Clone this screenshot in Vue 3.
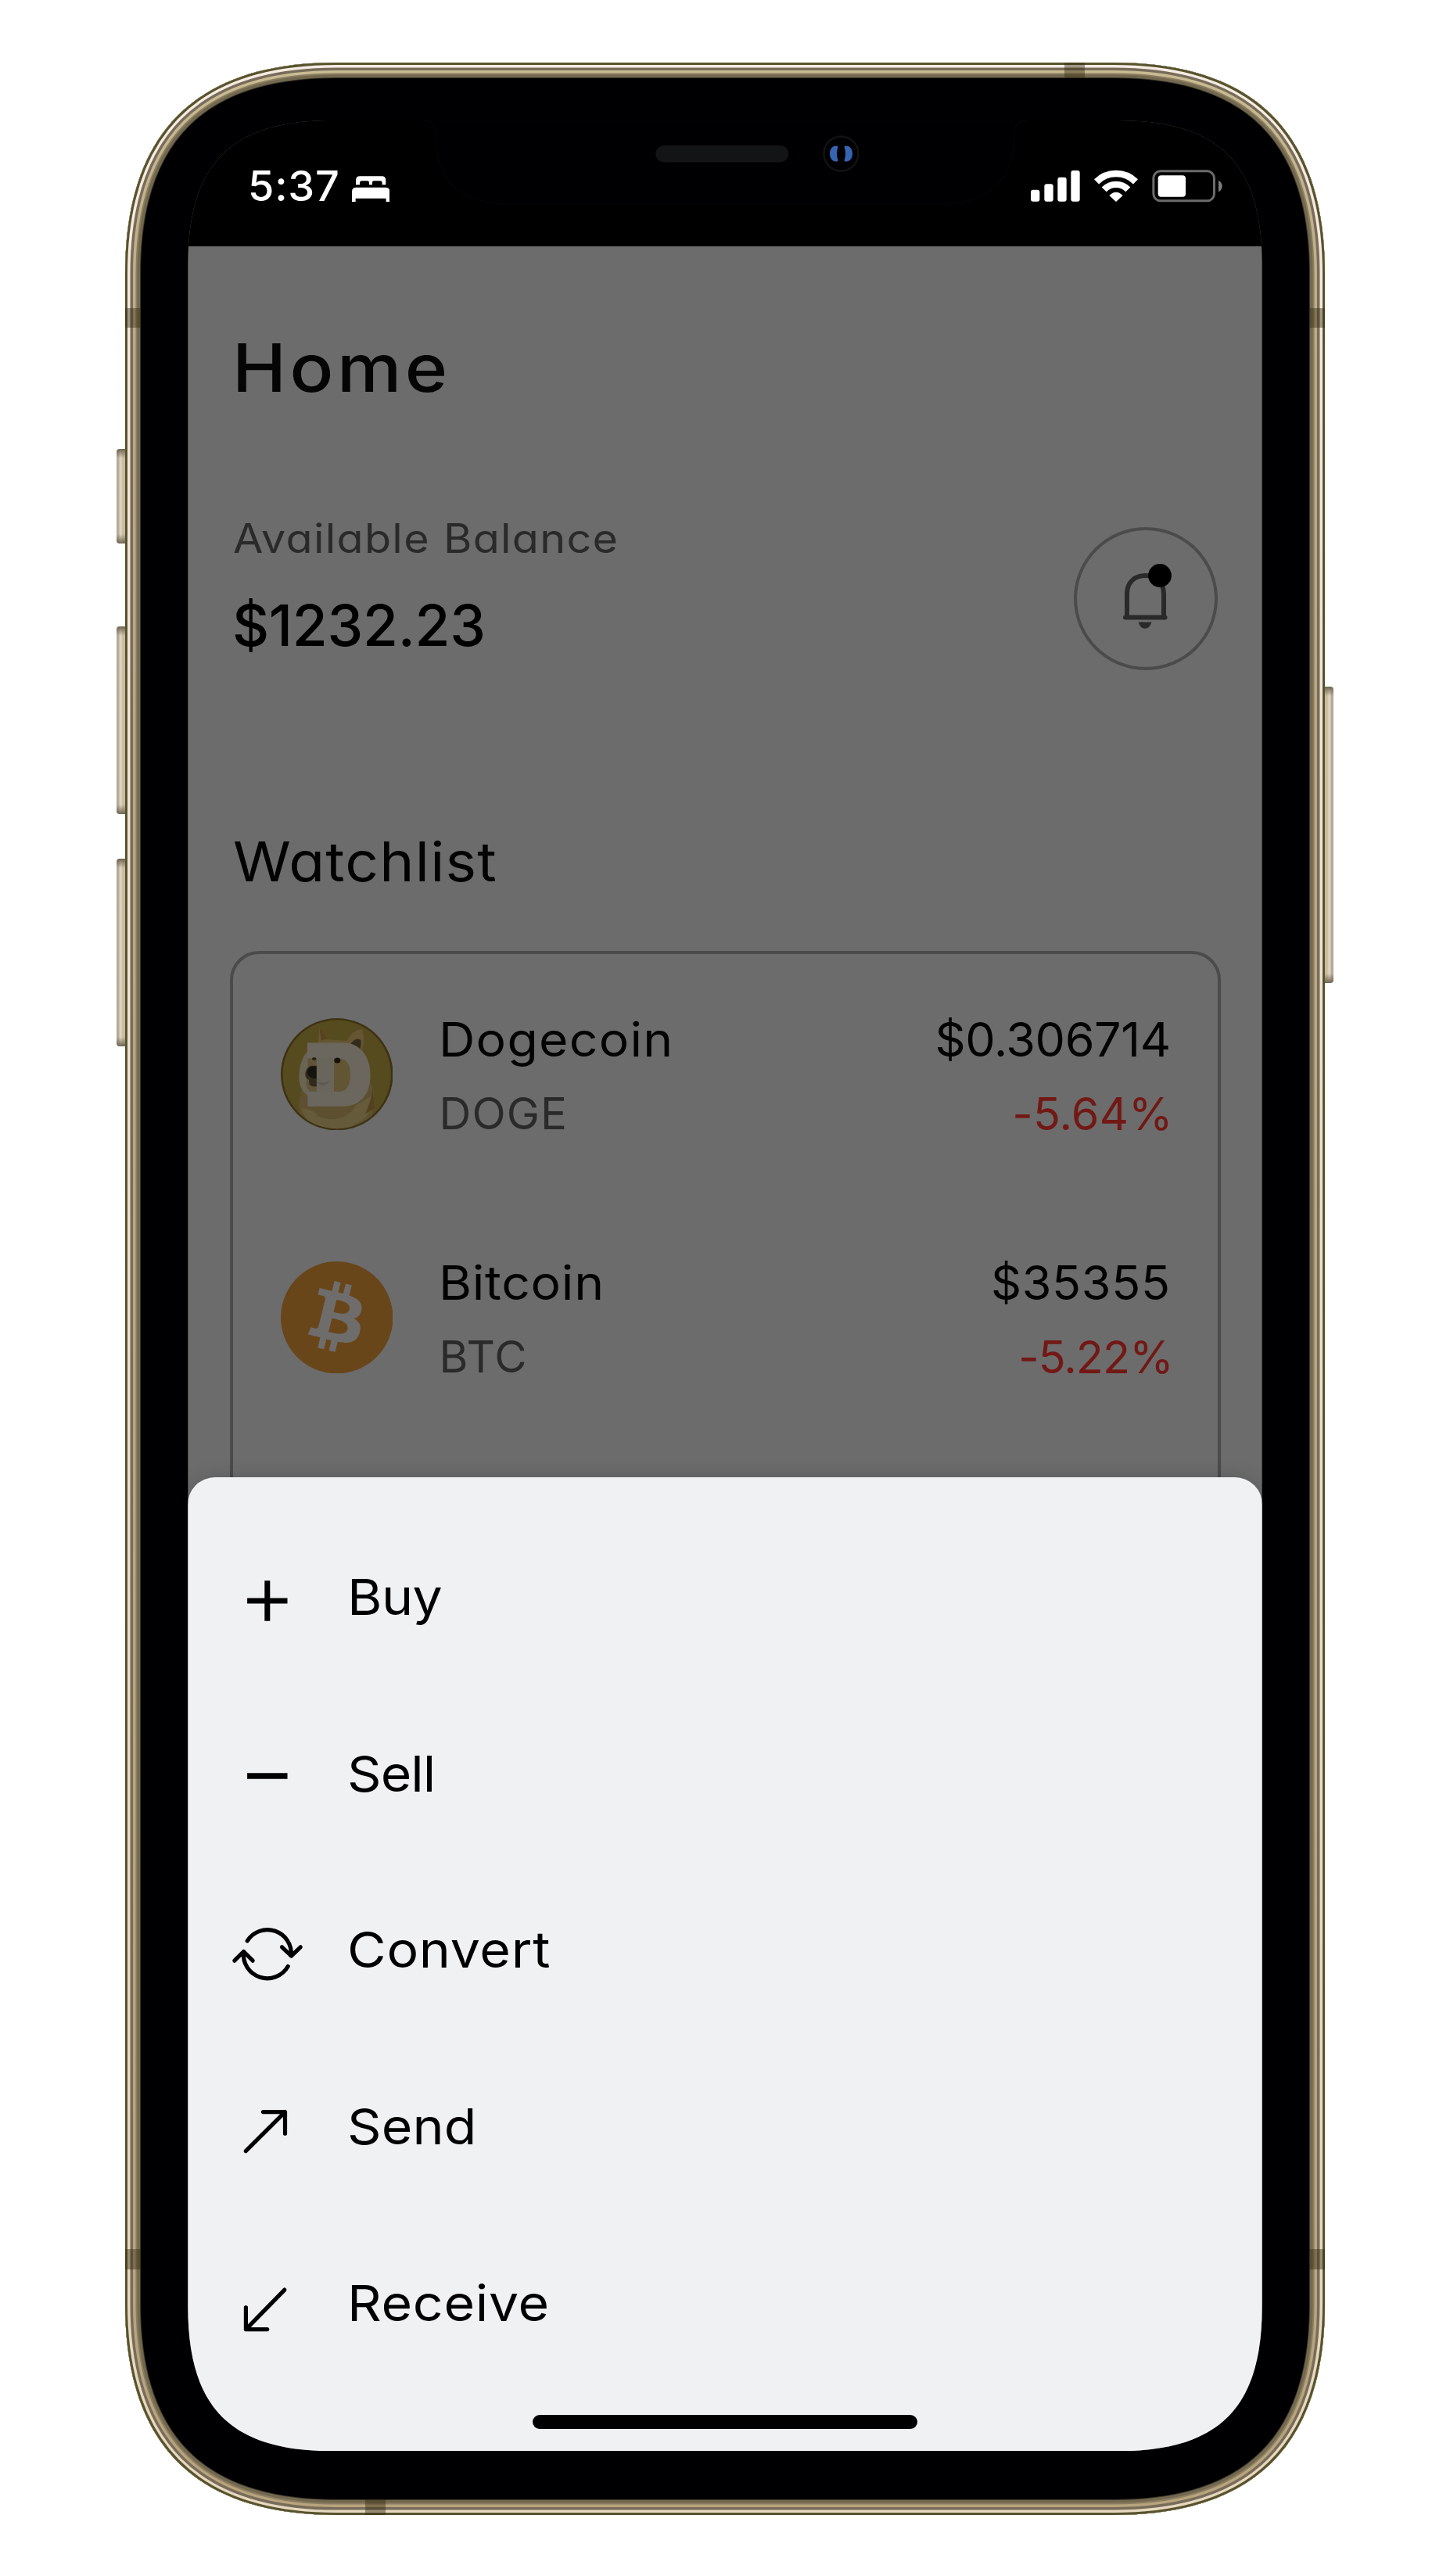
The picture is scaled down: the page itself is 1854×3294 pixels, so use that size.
<script setup>
// Rounded rectangle with continuous corners: `e` is where the curve starts, `c` its control distance.
function squircle(w, h, e, c) {
  return [
    `M0 ${e}C0 ${c} ${c} 0 ${e} 0`,
    `H${w - e}C${w - c} 0 ${w} ${c} ${w} ${e}`,
    `V${h - e}C${w} ${h - c} ${w - c} ${h} ${w - e} ${h}`,
    `H${e}C${c} ${h} 0 ${h - c} 0 ${h - e}Z`,
  ].join('')
}

const chassis = squircle(1534, 3136, 270, 90)

const coins = [
  { id: 'doge', name: 'Dogecoin', symbol: 'DOGE', price: '$0.306714', change: '-5.64%' },
  { id: 'btc', name: 'Bitcoin', symbol: 'BTC', price: '$35355', change: '-5.22%' },
]

const actions = [
  { id: 'buy', label: 'Buy', path: 'M22.1 53H73.5M47.8 27.3V78.7', width: 7, cap: 'butt' },
  { id: 'sell', label: 'Sell', path: 'M22.1 51H73.5', width: 7.5, cap: 'butt' },
  {
    id: 'convert',
    label: 'Convert',
    path: 'M22.2 36.8A30.5 30.5 0 0 1 78.3 56M66.5 44.8L78.5 56.2L90.2 44.8M17.5 50.7A30.5 30.5 0 0 0 74.2 69.5M5.8 62.2L17.5 50.5L29.2 62.2',
    width: 5.2,
    cap: 'round',
  },
  { id: 'send', label: 'Send', path: 'M20.2 79.6L70.5 29.6M42.5 29.6H70.5V57.2', width: 5.2, cap: 'round' },
  { id: 'receive', label: 'Receive', path: 'M69.8 31.1L20.4 81.6M20.4 53.7V81.6H47.7', width: 5.2, cap: 'round' },
]
</script>

<template>
  <div class="stage">
    <div class="phone">
      <i class="key mute"></i>
      <i class="key vol-up"></i>
      <i class="key vol-down"></i>
      <i class="key power"></i>

      <svg class="chassis" viewBox="0 0 1534 3136" fill="none">
        <defs>
          <clipPath id="body"><path :d="chassis" /></clipPath>
          <linearGradient id="tan" x1="0" y1="0" x2="0" y2="1">
            <stop offset="0" stop-color="#c9bc93" />
            <stop offset="0.12" stop-color="#bba984" />
            <stop offset="1" stop-color="#b7a47d" />
          </linearGradient>
          <linearGradient id="shine" x1="0" y1="0" x2="0" y2="1">
            <stop offset="0" stop-color="#f6ebe3" />
            <stop offset="1" stop-color="#e6d7bf" />
          </linearGradient>
        </defs>
        <g clip-path="url(#body)">
          <path :d="chassis" fill="#000003" stroke="#3d3829" stroke-width="40" />
          <path :d="chassis" stroke="#726850" stroke-width="38" />
          <path :d="chassis" stroke="#8a7d60" stroke-width="31" />
          <path :d="chassis" stroke="url(#tan)" stroke-width="27" />
          <path :d="chassis" stroke="#786c5a" stroke-width="20" />
          <path :d="chassis" stroke="url(#shine)" stroke-width="13" />
          <path :d="chassis" stroke="#57532d" stroke-width="6" />
          <g fill="#33290f" fill-opacity="0.43">
            <rect x="0" y="314" width="20" height="25" />
            <rect x="1514" y="314" width="20" height="25" />
            <rect x="0" y="2796" width="20" height="26" />
            <rect x="1514" y="2796" width="20" height="26" />
            <rect x="1201" y="0" width="26" height="20" />
            <rect x="307" y="3116" width="26" height="20" />
          </g>
        </g>
      </svg>

      <div class="screen">
        <header class="status">
          <svg class="notch" width="1373.4" height="161" viewBox="0 0 1373.4 161">
            <path d="M300 0Q316.7 0 316.7 17C316.7 70 340 107 415 107H958C1033 107 1056.7 70 1056.7 17Q1056.7 0 1073 0Z" fill="#000003" stroke="#07070d" stroke-width="1" />
            <rect x="598.3" y="32" width="170" height="21.5" rx="10.7" fill="#131415" />
            <circle cx="835.4" cy="42.5" r="22" fill="#000002" stroke="#121213" stroke-width="2.5" />
            <path d="M829 32.5C824 32.5 821 37 821 42.5S824 52.5 829 52.5Q831.5 53 831.5 51C829.5 46 829.5 39 831.5 34Q831.5 32 829 32.5Z" fill="#3565b0" />
            <path d="M842 32.5C847 32.5 850 37 850 42.5S847 52.5 842 52.5Q839.5 53 839.5 51C841.5 46 841.5 39 839.5 34Q839.5 32 842 32.5Z" fill="#3565b0" />
          </svg>
          <span class="time">5:37</span>
          <svg class="bed" width="48.3" height="33" viewBox="930 494 145 99" fill="#fff">
            <path d="M945 528V511Q945 495 961 495H1044Q1060 495 1060 511V528H1046V520Q1046 513 1039 513H1014Q1008 513 1008 519V528H996V519Q996 513 990 513H967Q960 513 960 520V528Z" />
            <path d="M930 593V554Q930 538 946 538H1059Q1075 538 1075 554V593H1061V580H944V593Z" />
          </svg>
          <svg class="signal" width="63" height="39.7" viewBox="233 474 189 119" fill="#fff">
            <rect x="233" y="548" width="34" height="45" rx="9" />
            <rect x="285" y="526" width="34" height="67" rx="9" />
            <rect x="336" y="500" width="34" height="93" rx="9" />
            <rect x="387" y="474" width="34" height="119" rx="9" />
          </svg>
          <svg class="wifi" width="55.7" height="41" viewBox="477 470 167 123" fill="none" stroke="#fff" stroke-width="26">
            <path d="M486 516A106 106 0 0 1 636 516" />
            <path d="M515 546A64 64 0 0 1 607 546" stroke-width="25" />
            <path d="M561 593L535 569Q561 543 587 569Z" fill="#fff" stroke="none" />
          </svg>
          <svg class="battery" width="89.7" height="41.7" viewBox="699 471 269 125" fill="none">
            <rect x="704.5" y="476.5" width="233" height="114" rx="27" stroke="#6b6b6b" stroke-width="9" />
            <rect x="722" y="493" width="106" height="82" rx="12" fill="#fff" />
            <path d="M954 512Q968 520 968 534T954 556Z" fill="#7c7c7c" />
          </svg>
        </header>

        <main class="home">
          <h1>Home</h1>

          <section class="balance">
            <div>
              <p class="caption">Available Balance</p>
              <p class="amount">$1232.23</p>
            </div>
            <button class="bell">
              <svg width="64" height="86" viewBox="1434 720 64 86" fill="none" stroke="#2a2a2b" stroke-width="6">
                <path d="M1441 789.5V759C1441 744 1451.5 736 1464.5 736S1488 744 1488 759V789.5" />
                <path d="M1439 789.5H1489.5" stroke-linecap="round" />
                <path d="M1455.5 795.5H1472.5Q1470 803.7 1464 803.7T1455.5 795.5Z" fill="#2a2a2b" stroke="none" />
                <circle cx="1483" cy="736" r="14.9" fill="#000" stroke="none" />
              </svg>
            </button>
          </section>

          <h2>Watchlist</h2>

          <ul class="watchlist">
            <li v-for="coin in coins" :key="coin.id" :class="['coin', coin.id]">
              <svg v-if="coin.id === 'doge'" class="logo" viewBox="197 118 363 401" preserveAspectRatio="none">
                <defs>
                  <clipPath id="face"><ellipse cx="378.5" cy="318.5" rx="176" ry="194" /></clipPath>
                </defs>
                <ellipse cx="378.5" cy="318.5" rx="181.5" ry="200.5" fill="#3c3213" />
                <ellipse cx="378.5" cy="318.5" rx="175" ry="194" fill="#564b1e" />
                <g clip-path="url(#face)">
                  <path d="M262 385Q250 440 262 470L330 520H460L492 470Q502 420 496 370L470 300H280Z" fill="#5c5030" />
                  <path d="M262 440Q300 440 320 470Q400 500 440 430L490 395Q492 450 470 475L400 520H300Z" fill="#655b3b" />
                  <path d="M470 460Q488 420 494 370L500 440Z" fill="#54401f" />
                  <path d="M318 205L322 152Q338 168 343 194L412 198Q430 158 460 158Q472 190 458 236L440 300H300Z" fill="#655532" />
                  <path d="M322 152Q338 168 343 192L328 198Z" fill="#59401f" />
                  <path d="M424 208Q440 186 456 196Q458 216 452 232Z" fill="#332b1b" />
                  <path d="M284 235Q256 270 256 330Q258 390 300 400H420L450 240Q380 190 284 215Z" fill="#6a6454" />
                </g>
                <path d="M283 206H400C458 206 487 262 487 320C487 388 456 433 398 433H284V380H313V262H283Z" fill="#6b675f" />
                <path d="M369 262H388Q422 266 422 320Q422 374 392 380H369Z" fill="#615533" />
                <path d="M284 262H313V380H290Q270 350 284 330Z" fill="#605539" />
                <path d="M313 262H369V380H313Z" fill="#69655a" />
                <path d="M313 288H294Q278 296 276 318Q276 334 288 338L290 356Q300 364 313 362Z" fill="#302b1e" />
                <path d="M312 290H296Q282 298 282 314Q290 334 312 334Z" fill="#15130d" />
                <path d="M314 344Q336 352 355 342Q348 358 332 358Q320 358 314 344Z" fill="#5e5b55" />
                <ellipse cx="380" cy="269" rx="10" ry="10" fill="#15120b" />
                <ellipse cx="305" cy="263" rx="7" ry="5" fill="#252015" />
              </svg>
              <svg v-else class="logo" viewBox="0 0 24 24">
                <circle cx="12" cy="12" r="11" fill="#6e6d6c" />
                <path fill="#69461a" d="M23.638 14.904c-1.602 6.43-8.113 10.34-14.542 8.736C2.67 22.05-1.244 15.525.362 9.105 1.962 2.67 8.475-1.243 14.9.358c6.43 1.605 10.342 8.115 8.738 14.548v-.002zm-6.35-4.613c.24-1.59-.974-2.45-2.64-3.03l.54-2.153-1.315-.33-.525 2.107c-.345-.087-.705-.167-1.064-.25l.526-2.127-1.32-.33-.54 2.165c-.285-.067-.565-.132-.84-.2l-1.815-.45-.35 1.407s.975.225.955.236c.535.136.63.486.615.766l-1.477 5.92c-.075.166-.24.406-.614.314.015.02-.96-.24-.96-.24l-.66 1.51 1.71.426.93.242-.54 2.19 1.32.327.54-2.17c.36.1.705.19 1.05.273l-.51 2.154 1.32.33.545-2.19c2.24.427 3.93.257 4.64-1.774.57-1.637-.03-2.58-1.217-3.196.854-.193 1.5-.76 1.68-1.93h.01zm-3.01 4.22c-.404 1.64-3.157.75-4.05.53l.72-2.9c.896.23 3.757.67 3.33 2.37zm.41-4.24c-.37 1.49-2.662.735-3.405.55l.654-2.64c.744.18 3.137.524 2.75 2.084v.006z" />
              </svg>
              <div class="names">
                <p class="name">{{ coin.name }}</p>
                <p class="symbol">{{ coin.symbol }}</p>
              </div>
              <div class="figures">
                <p class="price">{{ coin.price }}</p>
                <p class="change">{{ coin.change }}</p>
              </div>
            </li>
          </ul>
        </main>

        <div class="sheet">
          <ul class="actions">
            <li v-for="action in actions" :key="action.id" :class="['action', action.id]">
              <svg
                width="96"
                height="96"
                viewBox="0 0 96 96"
                fill="none"
                stroke="#000"
                :stroke-width="action.width"
                :stroke-linecap="action.cap"
                stroke-linejoin="round"
              >
                <path :d="action.path" />
              </svg>
              <span>{{ action.label }}</span>
            </li>
          </ul>
          <div class="home-bar"></div>
        </div>
      </div>
    </div>
  </div>
</template>

<style>
html,
body {
  background: #fff;
}
</style>

<style scoped>
.stage {
  box-sizing: border-box;
  width: 1854px;
  height: 3294px;
  padding: 80px 160px 0;
  background: #fff;
  font-family: Inter, "Liberation Sans", sans-serif;
  font-feature-settings: "cv11";
  overflow: hidden;
}

h1,
h2,
p,
ul {
  margin: 0;
  padding: 0;
  list-style: none;
  white-space: nowrap;
}

.phone {
  position: relative;
  box-sizing: border-box;
  width: 1534px;
  height: 3136px;
  padding: 74px 80.3px 0;
}

.chassis {
  position: absolute;
  inset: 0;
  width: 1534px;
  height: 3136px;
}

/* Side buttons sticking out of the frame */
.key {
  position: absolute;
  left: -11px;
  width: 12px;
  border-radius: 4px 0 0 4px;
  background:
    linear-gradient(#6f6452 0, rgba(111, 100, 82, 0) 12px, rgba(111, 100, 82, 0) calc(100% - 12px), #6f6452 100%),
    linear-gradient(90deg, #b5ab97 0 3px, #ddd3c0 4px 6px, #cbbb9d 8px 100%);
}

.mute {
  top: 494px;
  height: 121px;
}

.vol-up {
  top: 721px;
  height: 240px;
}

.vol-down {
  top: 1018px;
  height: 240px;
}

.power {
  left: auto;
  right: -11px;
  top: 798px;
  height: 379px;
  transform: scaleX(-1);
}

.screen {
  position: relative;
  width: 1373.4px;
  height: 2980.3px;
  background: #6c6c6c;
  overflow: hidden;
  clip-path: path("M0 185C0 55 55 0 185 0H1188.4C1318.4 0 1373.4 55 1373.4 185V2795.3C1373.4 2925.3 1318.4 2980.3 1188.4 2980.3H185C55 2980.3 0 2925.3 0 2795.3Z");
}

.status {
  position: relative;
  display: flex;
  align-items: flex-start;
  box-sizing: border-box;
  height: 161px;
  padding: 54px 51px 0 76.7px;
  background: #000;
  color: #fff;
}

.notch {
  position: absolute;
  left: 0;
  top: 0;
}

.time {
  width: 133px;
  font-size: 54px;
  font-weight: 500;
  line-height: 60px;
  letter-spacing: 0.8px;
}

.bed {
  margin-top: 17px;
}

.signal {
  margin: 10px 18.3px 0 auto;
}

.wifi {
  margin: 8.7px 18.3px 0 0;
}

.battery {
  margin-top: 9px;
}

.home {
  padding: 106.4px 53px 0 53.7px;
}

/* Widened letterforms */
h1,
h2,
.caption,
.name,
.action span {
  transform: scaleX(1.07);
  transform-origin: left;
}

h1 {
  margin-left: 3.2px;
  font-size: 85px;
  font-weight: 500;
  line-height: 100px;
  letter-spacing: 4.1px;
  color: #050505;
  transform: scaleX(1.09);
}

.balance {
  display: flex;
  justify-content: space-between;
  align-items: flex-end;
  height: 198px;
  margin-top: 137.6px;
}

.balance > div {
  align-self: flex-start;
  padding-left: 4px;
}

.caption {
  font-size: 52px;
  line-height: 60px;
  letter-spacing: 1.25px;
  color: #2a2a2a;
}

.amount {
  margin: 36.3px 0 0 -1px;
  font-size: 73px;
  font-weight: 500;
  line-height: 90px;
  letter-spacing: -0.3px;
  color: #000;
}

.bell {
  display: flex;
  box-sizing: border-box;
  width: 184px;
  height: 183px;
  margin-right: 4.2px;
  padding: 41.8px 0 0 57px;
  border: 4px solid #4b4b4b;
  border-radius: 50%;
  background: none;
}

h2 {
  margin: 200px 0 0 4px;
  font-size: 70px;
  font-weight: 400;
  line-height: 90px;
  letter-spacing: 1.15px;
  color: #030303;
}

.watchlist {
  display: flex;
  flex-direction: column;
  gap: 146px;
  box-sizing: border-box;
  height: 1100px;
  margin-top: 69px;
  padding: 73px 60px 0 61px;
  border: 4px solid #4b4b4b;
  border-radius: 37px;
}

.coin {
  display: flex;
  align-items: flex-start;
  height: 165px;
}

.logo {
  width: 143.5px;
  height: 143.5px;
  margin: 9px 59px 0 0;
}

.names {
  flex: 1;
}

.figures {
  text-align: right;
}

.name,
.price {
  font-size: 60px;
  line-height: 72px;
  color: #030303;
}

.price {
  font-size: 61px;
}

.symbol,
.change {
  margin-top: 25px;
  font-size: 56.5px;
  line-height: 68px;
  color: #2a2a2a;
}

.change {
  margin-right: -3px;
  font-size: 57.5px;
  color: #721815;
}

.doge .name {
  letter-spacing: 1.2px;
}

.doge .symbol,
.btc .symbol {
  letter-spacing: 1.15px;
}

.doge .price {
  letter-spacing: -0.38px;
}

.doge .change {
  letter-spacing: 0.19px;
}

.btc .name {
  letter-spacing: 0.7px;
}

.btc .price {
  letter-spacing: 0.67px;
}

.btc .change {
  letter-spacing: -0.91px;
}

/* Action sheet laid over the home screen */
.sheet {
  position: absolute;
  left: 0;
  right: 0;
  bottom: 0;
  box-sizing: border-box;
  height: 1245.4px;
  padding-top: 40.5px;
  border-radius: 35px 35px 0 0;
  background: #f0f1f3;
  box-shadow: 0 0 24px rgba(0, 0, 0, 0.16);
}

.action {
  display: flex;
  align-items: center;
  gap: 54px;
  height: 225.6px;
  padding-left: 53.5px;
  font-size: 63.5px;
  line-height: 76px;
  letter-spacing: 0.7px;
  color: #000;
}

.action.send {
  letter-spacing: 0.1px;
}

.action.buy {
  letter-spacing: -0.5px;
}

.action.sell {
  letter-spacing: -0.9px;
}

.home-bar {
  width: 491.5px;
  height: 18.4px;
  margin: 30.3px auto 0;
  border-radius: 10px;
  background: #000;
}
</style>
